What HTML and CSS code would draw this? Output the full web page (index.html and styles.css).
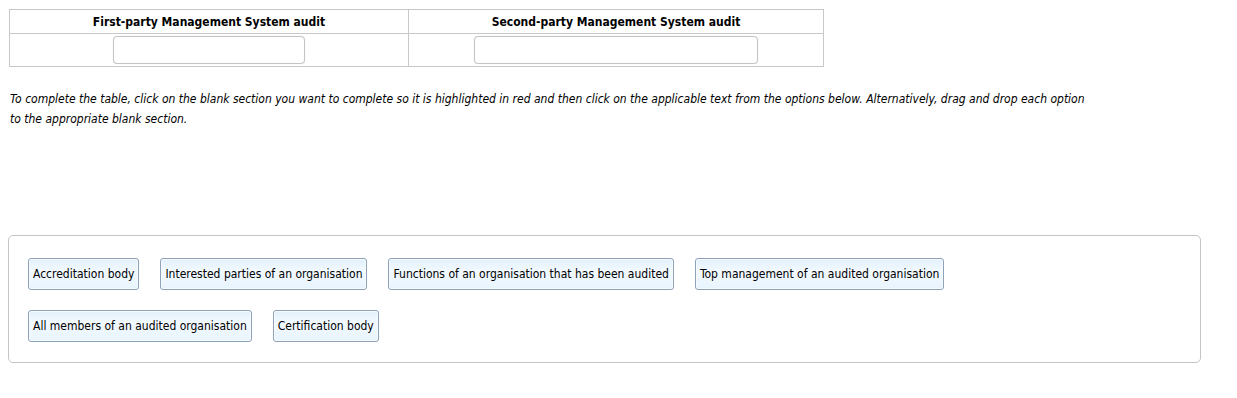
FILE: index.html
```html
<!DOCTYPE html>
<html lang="en">
<head>
	<meta charset="UTF-8">
	<title>Audit table</title>
<link rel="stylesheet" href="styles.css">
</head>
<body>
	<table id="grid">
		<tr>
			<th class="col1">First-party Management System audit</th>
			<th class="col2">Second-party Management System audit</th>
		</tr>
		<tr>
			<td><div class="blank w1"></div></td>
			<td><div class="blank w2"></div></td>
		</tr>
	</table>
	<p class="hint">To complete the table, click on the blank section you want to complete so it is highlighted in red and then click on the applicable text from the options below. Alternatively, drag and drop each option to the appropriate blank section.</p>
	<div id="options">
		<div class="row">
			<span class="opt">Accreditation body</span>
			<span class="opt">Interested parties of an organisation</span>
			<span class="opt">Functions of an organisation that has been audited</span>
			<span class="opt">Top management of an audited organisation</span>
		</div>
		<div class="row">
			<span class="opt">All members of an audited organisation</span>
			<span class="opt">Certification body</span>
		</div>
	</div>
</body>
</html>
```

FILE: styles.css
```css
* {
	margin: 0;
	padding: 0;
	box-sizing: border-box;
}
body {
	margin: 9px 8px;
	font-family: "DejaVu Sans Condensed", "DejaVu Sans", sans-serif;
	font-size: 12px;
	color: #000;
	background: #fff;
}
#grid {
	width: 815px;
	margin-left: 1px;
	border-collapse: collapse;
}
#grid th,
#grid td {
	border: 1px solid #c8c8c8;
	text-align: center;
}
#grid th {
	height: 24px;
	font-size: 12px;
	font-weight: bold;
}
#grid td {
	height: 33px;
}
.col1 {
	width: 399px;
}
.blank {
	height: 28px;
	margin: 0 auto;
	border: 1px solid #c4c4c4;
	border-radius: 4px;
	background: #fff;
	box-shadow: 0 0 1px #ddd;
}
.w1 {
	width: 192px;
}
.w2 {
	width: 284px;
}
.hint {
	margin: 22px 0 0 2px;
	width: 1075px;
	font-style: italic;
	font-size: 12px;
	line-height: 20px;
}
#options {
	margin-top: 106px;
	width: 1193px;
	padding: 22px 19px 20px;
	border: 1px solid #c4c4c4;
	border-radius: 5px;
}
.row {
	display: flex;
	gap: 21px;
	margin-bottom: 20px;
}
.row:last-child {
	margin-bottom: 0;
}
.opt {
	height: 32px;
	line-height: 30px;
	padding: 0 4px;
	border: 1px solid #8da2b8;
	border-radius: 3px;
	background: linear-gradient(#e2f0fb, #f2f9ff 40%, #e8f4fd);
	box-shadow: inset 0 0 0 1px #f6fbff;
	white-space: nowrap;
	cursor: pointer;
}
```
